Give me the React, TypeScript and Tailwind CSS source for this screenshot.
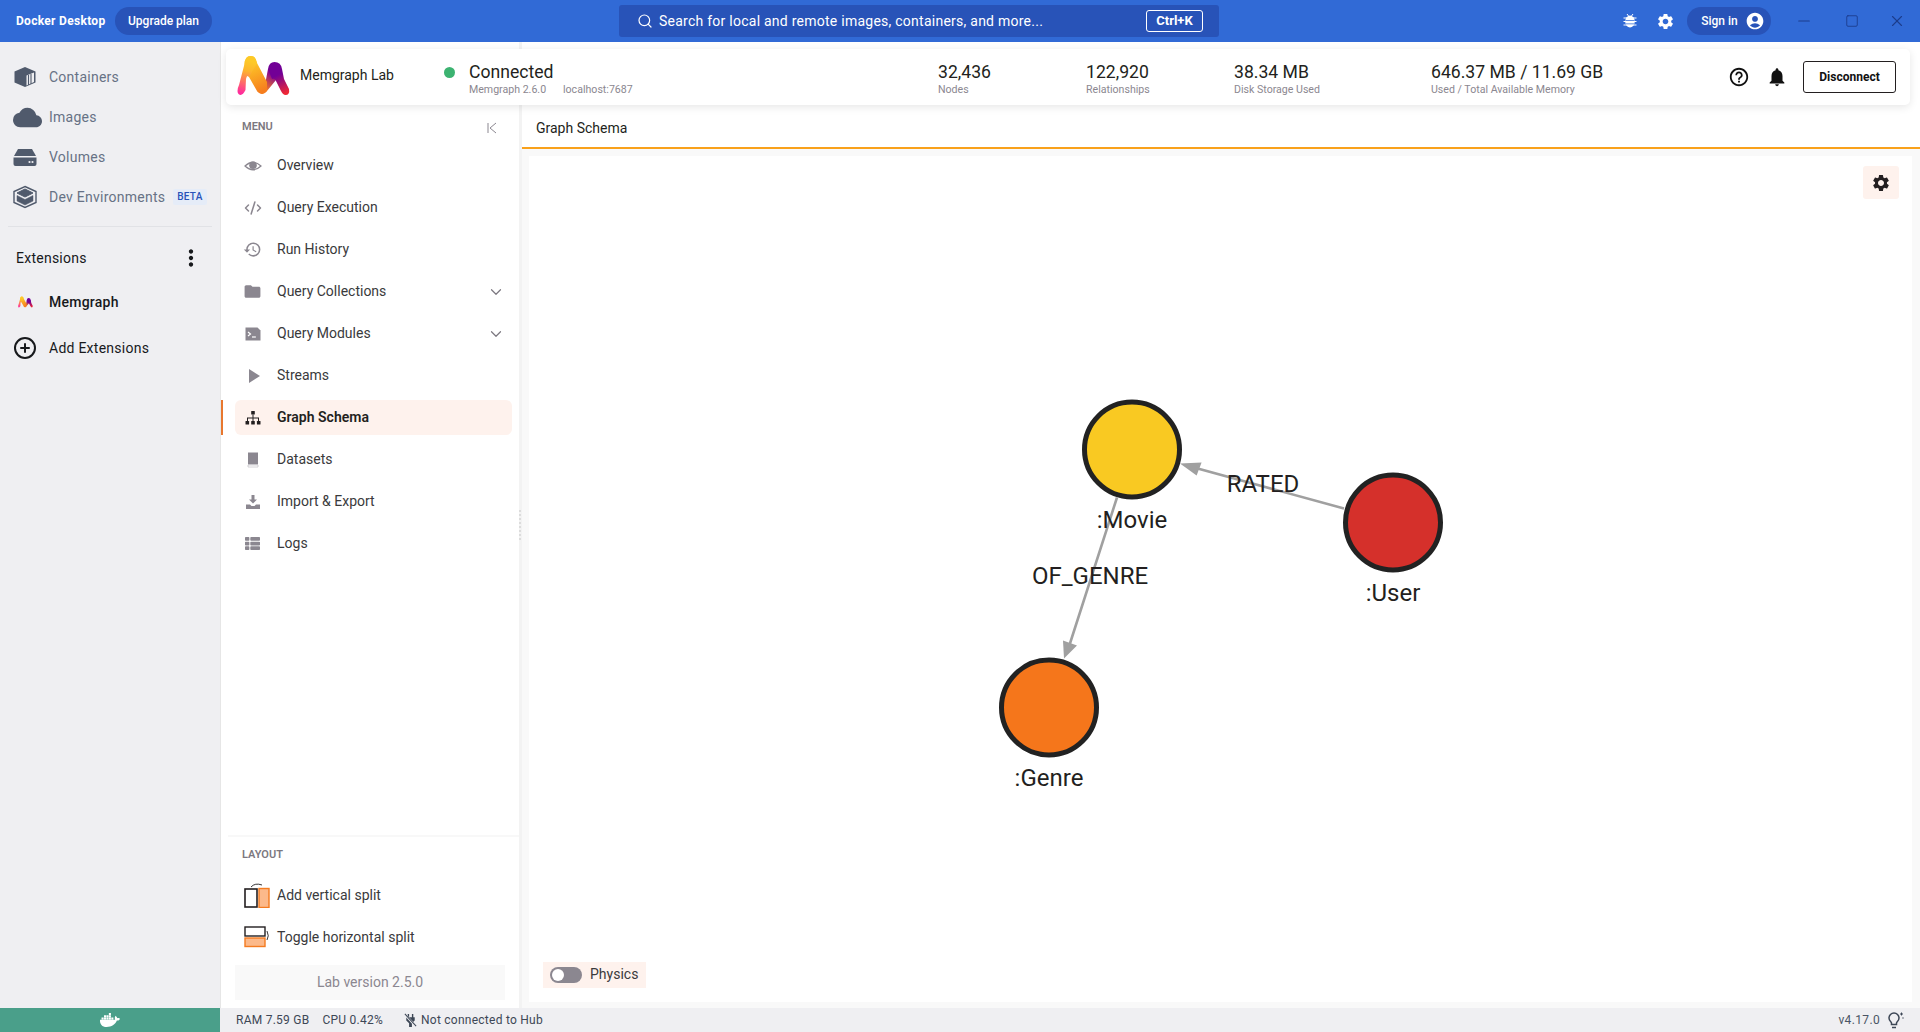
import React from 'react';
import { ChevronDown, CirclePlus, CodeXml, Minus, Search, Square, X } from 'lucide-react';
import { FaDocker, FaThList } from 'react-icons/fa';
import {
  MdAccountCircle,
  MdCloud,
  MdFolder,
  MdHelpOutline,
  MdHistory,
  MdMoreVert,
  MdNotifications,
  MdPlayArrow,
  MdSettings,
} from 'react-icons/md';

function MemgraphLogo({ className }: { className: string }) {
  return (
    <svg viewBox="238 55 53 43" className={className}>
      <defs>
        <linearGradient id="mg1" gradientUnits="userSpaceOnUse" x1="242" y1="92" x2="250" y2="60">
          <stop offset="0" stopColor="#ff2c9c" />
          <stop offset="0.7" stopColor="#fdb52d" />
          <stop offset="1" stopColor="#fdc927" />
        </linearGradient>
        <linearGradient id="mg2" gradientUnits="userSpaceOnUse" x1="250" y1="62" x2="263" y2="90">
          <stop offset="0" stopColor="#fdc927" />
          <stop offset="1" stopColor="#f67e1e" />
        </linearGradient>
        <linearGradient id="mg3" gradientUnits="userSpaceOnUse" x1="263" y1="90" x2="276" y2="68">
          <stop offset="0.1" stopColor="#f67e1e" />
          <stop offset="0.75" stopColor="#8a0b8a" />
          <stop offset="1" stopColor="#720096" />
        </linearGradient>
        <linearGradient id="mg4" gradientUnits="userSpaceOnUse" x1="276" y1="68" x2="287" y2="92">
          <stop offset="0.25" stopColor="#720096" />
          <stop offset="1" stopColor="#ee2735" />
        </linearGradient>
      </defs>
      <path d="M258 90 L266.5 81 L269 68 L283 68 L277 79 L268 90 Q263 96 258 90Z" fill="url(#mg3)" />
      <path d="M269 68 Q270 61 275.5 61 Q282 61 283 68 L285 78 L290 88 Q291 94 286.5 94 Q284 94 282 90 L276.5 79 Q275 77 273 78Z" fill="url(#mg4)" />
      <path d="M245.5 63 Q246 55 251.5 55 Q257 55 258 62 L268 81 L268 90 Q263 96 258 90 L250 76 Q249 74 247 74Z" fill="url(#mg2)" />
      <path d="M238.5 90 Q238.5 87 240 84 L245.5 63 Q246 55 251.5 55 Q257 55 258 62 L250 76 Q248 73 247 78 L246.5 89 Q243 96 239.5 93 Q238.5 92 238.5 90Z" fill="url(#mg1)" />
    </svg>
  );
}

function BoxIcon() {
  return (
    <svg viewBox="0 0 24 24" className="h-6 w-6 text-[#505a6c]" fill="currentColor">
      <path d="M12 2 L22.5 6.5 V17.5 L12 22 L1.5 17.5 V6.5Z" />
      <path d="M13.5 10.5 L21 7.5 V17 L13.5 20.5Z" fill="#efeff2" />
      <path d="M15.5 10v10M18 9v10" stroke="#505a6c" strokeWidth="1.1" />
    </svg>
  );
}

function VolumeIcon() {
  return (
    <svg viewBox="0 0 24 24" className="h-6 w-6 text-[#505a6c]" fill="currentColor">
      <path d="M5 4h14l4 7H1Z" />
      <path d="M0.5 12.5h23V19a2 2 0 0 1-2 2h-19a2 2 0 0 1-2-2Z" />
      <circle cx="16.5" cy="17" r="1.1" fill="#efeff2" />
      <circle cx="19.5" cy="17" r="1.1" fill="#efeff2" />
    </svg>
  );
}

function DevEnvIcon() {
  return (
    <svg viewBox="0 0 24 24" className="h-6 w-6 text-[#505a6c]" fill="none" stroke="currentColor">
      <path d="M12 1.5 L23 6.5 V17.5 L12 22.5 L1 17.5 V6.5Z" strokeWidth="1.4" />
      <path d="M12 4 L20 8 L12 12 L4 8Z" fill="currentColor" strokeWidth="1" />
      <path d="M4 10.5 L12 14.5 L20 10.5 V16 L12 20 L4 16Z" fill="currentColor" strokeWidth="0.5" />
    </svg>
  );
}

function EyeIcon() {
  return (
    <svg viewBox="0 0 18 18" className="h-[18px] w-[18px] text-[#8b8790]" fill="currentColor">
      <path d="M1 9 Q9 1.5 17 9 Q9 16.5 1 9Z" fill="none" stroke="currentColor" strokeWidth="1.2" />
      <circle cx="9" cy="8.2" r="3.8" />
    </svg>
  );
}

function TerminalIcon() {
  return (
    <svg viewBox="0 0 16 16" className="h-4 w-4 text-[#8b8790]">
      <path d="M0.5 1.5h12l3 3v10h-15Z" fill="currentColor" />
      <path d="M3 6l2.5 2L3 10" stroke="#fff" strokeWidth="1.2" fill="none" />
      <path d="M7 11h4" stroke="#fff" strokeWidth="1.2" />
    </svg>
  );
}

function SchemaIcon() {
  return (
    <svg viewBox="0 0 16 16" className="h-4 w-4 text-[#231f20]" fill="currentColor">
      <rect x="6.2" y="1" width="3.6" height="3.6" rx="0.5" />
      <rect x="0.5" y="11" width="3.6" height="3.6" rx="0.5" />
      <rect x="6.2" y="11" width="3.6" height="3.6" rx="0.5" />
      <rect x="11.9" y="11" width="3.6" height="3.6" rx="0.5" />
      <path d="M7.5 4.5h1V7.5H14V11h-1V8.5H8.5V11h-1V8.5H3V11H2V7.5H7.5Z" />
    </svg>
  );
}

function BookIcon() {
  return (
    <svg viewBox="0 0 16 16" className="h-4 w-4 text-[#8b8790]">
      <path d="M3 0.5h10V12.5H3Z" fill="currentColor" />
      <path d="M3 13h10v2H3Z" fill="#fff" stroke="#c9c7cb" strokeWidth="0.8" />
    </svg>
  );
}

function ImportIcon() {
  return (
    <svg viewBox="0 0 16 16" className="h-4 w-4 text-[#8b8790]" fill="currentColor">
      <path d="M6.5 1h3v4.5H12L8 9.5 4 5.5h2.5Z" />
      <path d="M1 10.5h4l1.5 1.5h3L11 10.5h4V15H1Z" />
    </svg>
  );
}

function CollapseIcon() {
  return (
    <svg viewBox="0 0 12 12" className="h-3 w-3" fill="none" stroke="#8b8790" strokeWidth="1">
      <path d="M2 1v10M10 1 L4 6 L10 11" />
    </svg>
  );
}

function BugIcon() {
  return (
    <svg viewBox="0 0 16 16" className="h-4 w-4 text-white" fill="currentColor">
      <ellipse cx="8" cy="8.5" rx="4.8" ry="6" />
      <path d="M1.5 4.5h13v1h-13ZM1.5 8h13v1h-13ZM1.5 11.5h13v1h-13Z" />
      <path d="M3.5 7.2h9v.7h-9ZM3.5 10.5h9v.7h-9Z" fill="#316ad6" />
      <path d="M5 1l1.5 2M11 1L9.5 3" stroke="currentColor" />
    </svg>
  );
}

function VerticalSplitIcon() {
  return (
    <svg viewBox="0 0 26 26" className="h-[26px] w-[26px]">
      <rect x="1" y="7" width="12" height="18" fill="#fff" stroke="#231f20" strokeWidth="1.6" />
      <rect x="15" y="6.5" width="10" height="19" fill="#fcb98a" stroke="#f47b20" strokeWidth="1.4" />
      <path d="M7 5 Q11 0.5 18 3" fill="none" stroke="#231f20" strokeWidth="0.9" />
    </svg>
  );
}

function HorizontalSplitIcon() {
  return (
    <svg viewBox="0 0 26 22" className="h-[22px] w-[26px]">
      <rect x="1" y="1" width="20" height="9" fill="#fff" stroke="#231f20" strokeWidth="1.4" />
      <rect x="1" y="12" width="20" height="8.5" fill="#fcb98a" stroke="#f47b20" strokeWidth="1.4" />
      <path d="M23 5 Q25.5 10 23 14" fill="none" stroke="#231f20" strokeWidth="0.9" />
    </svg>
  );
}

function NoHubIcon() {
  return (
    <svg viewBox="0 0 16 16" className="h-[15px] w-[15px] text-[#3d4756]" fill="currentColor">
      <path d="M5 1v3.5H3.5V8l3 3v4h3v-4l3-3V4.5H11V1H9.5v3.5h-3V1Z" />
      <path d="M2 1.5 L14 14.5" stroke="#efeff2" strokeWidth="2.4" />
      <path d="M2 1 L14 14" stroke="currentColor" strokeWidth="1.1" />
    </svg>
  );
}

function TipIcon() {
  return (
    <svg viewBox="0 0 18 18" className="ml-[7px] mr-[15px] h-[18px] w-[18px]" fill="none" stroke="#3d4756" strokeWidth="1.5">
      <path d="M5 16.5h4M4.5 13.5h5V12c0-1 2.5-2 2.5-5a5 5 0 0 0-10 0c0 3 2.5 4 2.5 5Z" />
      <path d="M14.5 1.5v3M13 3h3" strokeWidth="1" />
      <circle cx="16" cy="7" r="0.7" fill="#3d4756" stroke="none" />
    </svg>
  );
}

const dockerNav = [
  { label: 'Containers', icon: <BoxIcon /> },
  { label: 'Images', icon: <MdCloud className="h-[29px] w-[29px] text-[#505a6c]" /> },
  { label: 'Volumes', icon: <VolumeIcon /> },
  { label: 'Dev Environments', icon: <DevEnvIcon />, beta: true },
];

const iconGrey = 'text-[#8b8790]';

const menuItems = [
  { label: 'Overview', icon: <EyeIcon /> },
  { label: 'Query Execution', icon: <CodeXml className={`h-[18px] w-[18px] ${iconGrey}`} strokeWidth={2} /> },
  { label: 'Run History', icon: <MdHistory className={`h-[19px] w-[19px] ${iconGrey}`} /> },
  { label: 'Query Collections', icon: <MdFolder className={`h-[19px] w-[19px] ${iconGrey}`} />, expandable: true },
  { label: 'Query Modules', icon: <TerminalIcon />, expandable: true },
  { label: 'Streams', icon: <MdPlayArrow className={`h-[24px] w-[24px] ${iconGrey}`} /> },
  { label: 'Graph Schema', icon: <SchemaIcon />, active: true },
  { label: 'Datasets', icon: <BookIcon /> },
  { label: 'Import & Export', icon: <ImportIcon /> },
  { label: 'Logs', icon: <FaThList className={`h-[15px] w-[15px] ${iconGrey}`} /> },
];

function Stat({ value, label, className }: { value: string; label: string; className: string }) {
  return (
    <div className={`pt-[4px] ${className}`}>
      <div className="text-[17.6px] leading-[22px] text-[#231f20]">{value}</div>
      <div className="text-[10.6px] leading-[14px] text-[#8b8790]">{label}</div>
    </div>
  );
}

function TopBar() {
  return (
    <header className="flex h-[42px] shrink-0 items-center bg-[#316ad6] text-white">
      <span className="ml-4 w-[99px] text-[12px] font-bold tracking-[0.3px]">Docker Desktop</span>
      <button className="h-7 w-[97px] rounded-full bg-[#2853b8] text-[12px] font-medium">Upgrade plan</button>
      <div className="ml-[407px] flex h-8 w-[600px] items-center rounded-[3px] bg-[#2853b8] pl-[18px]">
        <Search className="h-4 w-4" strokeWidth={1.8} />
        <span className="ml-[6px] text-[14px] tracking-[0.25px]">Search for local and remote images, containers, and more...</span>
        <span className="absolute left-[1146px] flex h-[22px] w-[57px] items-center justify-center rounded-[3px] border border-white text-[13px] font-bold">
          Ctrl+K
        </span>
      </div>
      <div className="ml-auto flex items-center">
        <BugIcon />
        <MdSettings className="ml-[18px] h-[19px] w-[19px]" />
        <div className="ml-[12px] flex h-7 w-[84px] items-center justify-center gap-[7px] rounded-full bg-[#2853b8] pl-[8px] text-[12px] font-medium">
          Sign in
          <MdAccountCircle className="h-[20px] w-[20px]" />
        </div>
        <div className="ml-[24px] flex items-center text-[#1c3c8c]">
          <Minus className="h-[18px] w-[18px]" strokeWidth={1.5} />
          <Square className="ml-[32px] h-[14px] w-[14px]" strokeWidth={1.5} />
          <X className="ml-[29px] mr-[14px] h-[18px] w-[18px]" strokeWidth={1.5} />
        </div>
      </div>
    </header>
  );
}

function DockerSidebar() {
  return (
    <aside className="w-[220px] shrink-0 bg-[#efeff2] pt-[15px]">
      {dockerNav.map((item) => (
        <div key={item.label} className="flex h-10 items-center pl-[13px] text-[14px] tracking-[0.25px] text-[#677285]">
          <span className="flex w-[36px] items-center">{item.icon}</span>
          {item.label}
          {item.beta && (
            <span className="ml-[8px] rounded-[2px] bg-[#e5ecf8] px-[4px] text-[10px] font-medium leading-[16px] text-[#2853b8]">
              BETA
            </span>
          )}
        </div>
      ))}
      <div className="mx-2 mt-[9px] h-px bg-[#e1e2e6]" />
      <div className="mt-[11px] flex h-10 items-center justify-between pl-4 pr-[16px] text-[14px] tracking-[0.25px] text-[#17191c]">
        Extensions
        <MdMoreVert className="h-[26px] w-[26px]" />
      </div>
      <div className="mt-1 flex h-10 items-center pl-[18px] text-[14px] font-medium tracking-[0.25px] text-[#17191c]">
        <MemgraphLogo className="h-[13px] w-[15px]" />
        <span className="ml-4">Memgraph</span>
      </div>
      <div className="mt-[6px] flex h-10 items-center pl-[13px] text-[14px] tracking-[0.25px] text-[#17191c]">
        <CirclePlus className="h-[24px] w-[24px]" strokeWidth={2} />
        <span className="ml-[12px]">Add Extensions</span>
      </div>
    </aside>
  );
}

function HeaderCard() {
  return (
    <div className="absolute left-[6px] right-[10px] top-[7px] z-10 flex h-[56px] items-center rounded-[5px] bg-white pl-[11px] shadow-[0_2px_8px_rgba(0,0,0,0.1)]">
      <MemgraphLogo className="h-[43px] w-[53px] shrink-0" />
      <span className="mb-[4px] ml-[10px] w-[144px] text-[14px] text-[#231f20]">Memgraph Lab</span>
      <span className="mb-[10px] h-[11px] w-[11px] rounded-full bg-[#3cb371]" />
      <div className="ml-[14px] w-[469px] pt-[4px]">
        <div className="text-[17.6px] leading-[22px] text-[#231f20]">Connected</div>
        <div className="flex text-[10.6px] leading-[14px] text-[#8b8790]">
          <span className="w-[94px]">Memgraph 2.6.0</span>
          <span>localhost:7687</span>
        </div>
      </div>
      <Stat value="32,436" label="Nodes" className="w-[148px]" />
      <Stat value="122,920" label="Relationships" className="w-[148px]" />
      <Stat value="38.34 MB" label="Disk Storage Used" className="w-[197px]" />
      <Stat value="646.37 MB / 11.69 GB" label="Used / Total Available Memory" className="w-[297px]" />
      <MdHelpOutline className="h-[22px] w-[22px] text-[#111]" />
      <MdNotifications className="ml-[16px] h-[22px] w-[22px] text-[#111]" />
      <button className="ml-[15px] h-[32px] w-[93px] rounded-[3px] border border-[#231f20] text-[12px] font-bold text-[#111]">
        Disconnect
      </button>
    </div>
  );
}

function MenuPanel() {
  return (
    <nav className="flex w-[299px] shrink-0 flex-col border-l border-[#e6e6e6] bg-white pb-[8px] pt-[63px] text-[14px] text-[#3a3a3c]">
      <div className="flex h-[43px] items-center justify-between pl-[21px] pr-[21px] pt-[2px] text-[11px] font-semibold text-[#7c7880]">
        MENU
        <CollapseIcon />
      </div>
      <div className="flex flex-1 flex-col gap-[7px]">
        {menuItems.map((item) => (
          <div key={item.label} className="relative h-[35px]">
            {item.active && <span className="absolute bottom-0 left-0 top-0 w-[2px] bg-[#e8772e]" />}
            <div
              className={`ml-[14px] flex h-[35px] w-[277px] items-center rounded-[6px] ${
                item.active ? 'bg-[#fef2ed] font-semibold text-[#231f20]' : ''
              }`}
            >
              <span className="mr-[7px] flex w-[35px] justify-center">{item.icon}</span>
              <span>{item.label}</span>
              {item.expandable && <ChevronDown className="ml-auto mr-[7px] h-[18px] w-[18px] text-[#7c7880]" strokeWidth={1.6} />}
            </div>
          </div>
        ))}
      </div>
      <div className="ml-[7px] border-t-2 border-[#f8f8f8]">
        <div className="flex h-[35px] items-center pl-[14px] pt-[1px] text-[11px] font-semibold text-[#7c7880]">LAYOUT</div>
        <div className="mt-[2px] flex h-[42px] items-center pl-[16px]">
          <span className="flex w-[33px]">
            <VerticalSplitIcon />
          </span>
          Add vertical split
        </div>
        <div className="flex h-[42px] items-center pl-[16px]">
          <span className="flex w-[33px]">
            <HorizontalSplitIcon />
          </span>
          Toggle horizontal split
        </div>
        <div className="ml-[7px] mt-[7px] flex h-[35px] w-[270px] items-center justify-center bg-[#f9f9f9] text-[#8b8790]">
          Lab version 2.5.0
        </div>
      </div>
    </nav>
  );
}

function SchemaGraph() {
  const nodes = [
    { cx: 603, cy: 293, fill: '#f9c922', label: ':Movie' },
    { cx: 864, cy: 366, fill: '#d5302b', label: ':User' },
    { cx: 520, cy: 551, fill: '#f5761b', label: ':Genre' },
  ];
  return (
    <svg className="absolute inset-0 h-full w-full" viewBox="0 0 1383 845" fontFamily="Roboto, sans-serif">
      <path d="M815 352 L665 311 M588 341 L540 490" stroke="#a0a0a0" strokeWidth="2.6" fill="none" />
      <path d="M651 307 L672.6 306 L667.6 319Z" fill="#a0a0a0" />
      <path d="M535 502 L534 484 L548 489Z" fill="#a0a0a0" />
      {nodes.map((n) => (
        <g key={n.label}>
          <circle cx={n.cx} cy={n.cy} r="47.5" fill={n.fill} stroke="#222" strokeWidth="5" />
          <text x={n.cx} y={n.cy + 78} fontSize="24" textAnchor="middle" fill="#231f20">
            {n.label}
          </text>
        </g>
      ))}
      <text x="734" y="335" fontSize="24" textAnchor="middle" fill="#231f20">
        RATED
      </text>
      <text x="561" y="427" fontSize="24" textAnchor="middle" fill="#231f20">
        OF_GENRE
      </text>
    </svg>
  );
}

function GraphPanel() {
  return (
    <main className="flex min-w-0 flex-1 flex-col bg-white pt-[63px]">
      <div className="flex h-[42px] items-center pl-[14px] pt-[5px] text-[14px] text-[#231f20]">Graph Schema</div>
      <div className="h-[2px] bg-[#f9a11b]" />
      <div className="flex flex-1 bg-[#f9f9f9] pb-[6px] pl-[7px] pr-[8px] pt-[7px]">
        <div className="relative flex-1 bg-white">
          <SchemaGraph />
          <button className="absolute right-[13px] top-[10px] flex h-[33px] w-[36px] items-center justify-center rounded-[3px] bg-[#fef2ed]">
            <MdSettings className="h-[20px] w-[20px] text-[#231f20]" />
          </button>
          <div className="absolute bottom-[14px] left-[14px] flex h-[26px] w-[103px] items-center bg-[#fef2ed] pl-[7px] text-[14px] text-[#3a3a3c]">
            <span className="mb-px flex h-4 w-8 items-center rounded-full bg-[#8b8790] pl-[2px]">
              <span className="h-3 w-3 rounded-full bg-white" />
            </span>
            <span className="mb-[2px] ml-2">Physics</span>
          </div>
        </div>
      </div>
    </main>
  );
}

function StatusBar() {
  return (
    <footer className="flex h-6 shrink-0 items-center bg-[#efeff2] text-[12px] tracking-[0.25px] text-[#3d4756]">
      <div className="flex h-full w-[220px] items-center justify-center bg-[#4a9f8a] text-white">
        <FaDocker className="h-[20px] w-[20px]" />
      </div>
      <span className="ml-4">RAM 7.59 GB</span>
      <span className="ml-[13px]">CPU 0.42%</span>
      <span className="ml-[20px]">
        <NoHubIcon />
      </span>
      <span className="ml-[3px]">Not connected to Hub</span>
      <span className="ml-auto tracking-[0.35px] text-[#4a5565]">v4.17.0</span>
      <TipIcon />
    </footer>
  );
}

export default function App() {
  return (
    <div className="flex h-screen w-screen flex-col overflow-hidden font-[Roboto,sans-serif]">
      <TopBar />
      <div className="flex min-h-0 flex-1">
        <DockerSidebar />
        <div className="relative flex min-w-0 flex-1 bg-[#f3f3f3]">
          <HeaderCard />
          <MenuPanel />
          <div className="flex w-[3px] shrink-0 items-center">
            <span className="h-[30px] border-l-2 border-dotted border-[#dcdcdc]" />
          </div>
          <GraphPanel />
        </div>
      </div>
      <StatusBar />
    </div>
  );
}
